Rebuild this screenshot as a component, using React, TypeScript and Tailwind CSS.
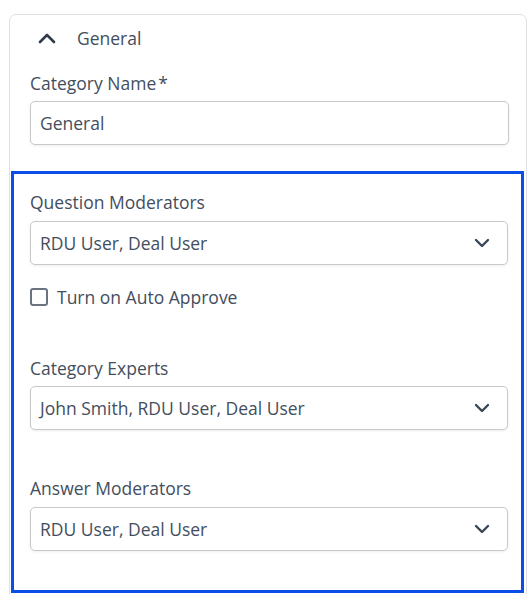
import React from "react";

function ChevronDown() {
  return (
    <svg width="16" height="10" viewBox="0 0 16 10" fill="none" className="shrink-0">
      <path d="M2 2l6 6 6-6" stroke="#3a4656" strokeWidth="2.4" strokeLinecap="round" strokeLinejoin="round" />
    </svg>
  );
}

function ChevronUp() {
  return (
    <svg width="18" height="12" viewBox="0 0 18 12" fill="none" className="shrink-0">
      <path d="M2 10l7-7 7 7" stroke="#2f3b4b" strokeWidth="2.6" strokeLinecap="round" strokeLinejoin="round" />
    </svg>
  );
}

function SelectField({ label, value, labelGap }: { label: string; value: string; labelGap: string }) {
  return (
    <div className="flex flex-col">
      <label className={"leading-6 " + labelGap}>{label}</label>
      <div className="mr-[13px] flex h-11 items-center justify-between rounded-[5px] border border-[#c9c9c9] bg-white pl-[9px] pr-[17px] shadow-[0_1px_3px_rgba(0,0,0,0.07)]">
        <span>{value}</span>
        <ChevronDown />
      </div>
    </div>
  );
}

export default function App() {
  return (
    <div
      className="h-[594px] overflow-hidden bg-white pl-[9px] pr-px pt-[14px] text-[17.5px] text-[#434e5d]"
      style={{ fontFamily: '"Open Sans", "Noto Sans", sans-serif' }}
    >
      <div className="h-[620px] rounded-t-[7px] border border-[#dde1e5]">
        <div className="flex items-center pl-[28px] pt-[11px] leading-6">
          <ChevronUp />
          <span className="ml-[21px]">General</span>
        </div>

        <div className="mt-[21px] flex flex-col pl-[20px]">
          <label className="mb-[6px] leading-6">
            Category Name<span className="ml-[2px]">*</span>
          </label>
          <div className="mr-[17px] flex h-11 items-center rounded-[5px] border border-[#c9c9c9] bg-white pl-[9px] shadow-[0_1px_3px_rgba(0,0,0,0.07)]">
            General
          </div>
        </div>

        <div className="ml-px mr-[2px] mt-[26px] h-[422px] border-[3px] border-[#0a4de8] pl-[16px] pt-[16px]">
          <SelectField label="Question Moderators" value="RDU User, Deal User" labelGap="mb-[7px]" />

          <div className="mt-[20px] flex items-center leading-6">
            <span className="h-[18px] w-[18px] rounded-[3px] border-2 border-[#6b7280] bg-white" />
            <span className="ml-[9px]">Turn on Auto Approve</span>
          </div>

          <div className="mt-[47px]">
            <SelectField label="Category Experts" value="John Smith, RDU User, Deal User" labelGap="mb-[6px]" />
          </div>

          <div className="mt-[46px]">
            <SelectField label="Answer Moderators" value="RDU User, Deal User" labelGap="mb-[7px]" />
          </div>
        </div>
      </div>
    </div>
  );
}
